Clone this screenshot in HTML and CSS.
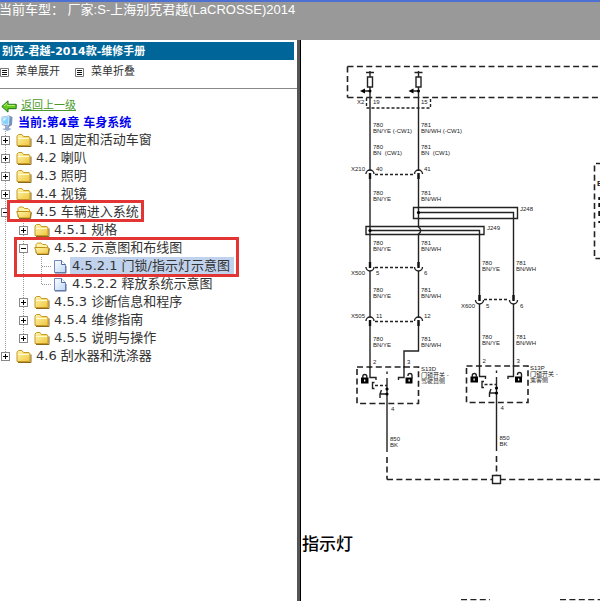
FILE: index.html
```html
<!DOCTYPE html>
<html lang="zh-CN">
<head>
<meta charset="utf-8">
<title>别克-君越-2014款-维修手册</title>
<link rel="stylesheet" href="styles.css">
</head>
<body>
<svg class="defs" aria-hidden="true">
  <defs>
    <linearGradient id="gold" x1="0" y1="0" x2="1" y2="1"><stop offset="0" stop-color="#fff6b0"/><stop offset="1" stop-color="#efc53c"/></linearGradient>
    <linearGradient id="paper" x1="0" y1="0" x2="1" y2="1"><stop offset="0" stop-color="#fff"/><stop offset="1" stop-color="#bcd6f8"/></linearGradient>
    <symbol id="folder" viewBox="0 0 16 16"><path d="M1 13.5V4l1.5-1.500h3.500L7.500 4.500H13l1 1.500v7.500z" fill="url(#gold)" stroke="#c79a28"/><path d="M2 14.500h13V6.500" fill="none" stroke="#8c6a18"/><path d="M2 6.500h11" stroke="#fffbd0"/></symbol>
    <symbol id="open" viewBox="0 0 16 16"><path d="M2 13V4.500L3.500 3H7l1.500 1.500H12L13.500 6v7z" fill="#fff3a8" stroke="#c79a28"/><path d="M.7 7.500h10.500L15 8l-1 6H3z" fill="url(#gold)" stroke="#c0901f"/><path d="M3 14.500h11.500l.8-6" fill="none" stroke="#8c6a18"/></symbol>
    <symbol id="page" viewBox="0 0 16 16"><path d="M2.500 2.500h7l4 4v8h-11z" fill="url(#paper)" stroke="#7089bd"/><path d="M9.500 2.500v4h4" fill="#fff" stroke="#52699f"/><path d="M3 15h11V8" fill="none" stroke="#596a91"/></symbol>
    <symbol id="menu" viewBox="0 0 9 9"><path d="M.5.5h8v8h-8z" fill="#fff" stroke="#777"/><path d="M2 2.500h5M2 4.500h5M2 6.500h5" stroke="#111"/></symbol>
  </defs>
</svg>

<header class="top">当前车型： 厂家:S-上海别克君越(LaCROSSE)2014</header>

<main class="frames">
  <aside class="side">
    <h1 class="title">别克-君越-2014款-维修手册</h1>
    <div class="tools">
      <button class="tool" type="button"><svg class="menu"><use href="#menu"/></svg>菜单展开</button>
      <button class="tool" type="button"><svg class="menu"><use href="#menu"/></svg>菜单折叠</button>
    </div>
    <nav class="nav">
      <a class="back" href="#up"><svg class="arrow" viewBox="0 0 16 13"><path d="M.8 6.500L7 .9v3.400h8.200v4.400H7v3.400z" fill="#65cb21" stroke="#1c7212"/><path d="M3 6L6.200 3.200M6 5.400h8" stroke="#bdf27c" fill="none"/></svg><span>返回上一级</span></a>
      <div class="current"><svg class="pc" viewBox="0 0 14 16"><path d="M1 2l8-1.500 3.500 1.500-.5 8-3 2-7-2z" fill="#7793bd"/><path d="M1.500 2.500L9 1.500l-.5 8.500-6-1z" fill="#83d4fa" stroke="#d2e8f8"/><path d="M3 3.500l4-.5-3.500 3.500z" fill="#d8f5ff"/><path d="M5 11l4 1v2H5zM2 14l6-1.500 3.500 1.500-4 2z" fill="#94a9c8"/></svg>当前:第4章 车身系统</div>

      <ul class="tree">
        <li><div class="row"><button class="box plus" type="button" aria-label="4.1"></button><svg class="ico"><use href="#folder"/></svg><a href="#s1">4.1 固定和活动车窗</a></div></li>
        <li><div class="row"><button class="box plus" type="button" aria-label="4.2"></button><svg class="ico"><use href="#folder"/></svg><a href="#s2">4.2 喇叭</a></div></li>
        <li><div class="row"><button class="box plus" type="button" aria-label="4.3"></button><svg class="ico"><use href="#folder"/></svg><a href="#s3">4.3 照明</a></div></li>
        <li><div class="row"><button class="box plus" type="button" aria-label="4.4"></button><svg class="ico"><use href="#folder"/></svg><a href="#s4">4.4 视镜</a></div></li>
        <li><div class="row marked"><button class="box" type="button" aria-label="4.5"></button><svg class="ico"><use href="#open"/></svg><a href="#s5">4.5 车辆进入系统</a></div>
          <ul>
            <li><div class="row"><button class="box plus" type="button" aria-label="4.5.1"></button><svg class="ico"><use href="#folder"/></svg><a href="#s51">4.5.1 规格</a></div></li>
            <li class="group"><div class="row"><button class="box" type="button" aria-label="4.5.2"></button><svg class="ico"><use href="#open"/></svg><a href="#s52">4.5.2 示意图和布线图</a></div>
              <ul>
                <li><div class="row"><span class="twig"></span><svg class="ico"><use href="#page"/></svg><a class="selected" href="#s521">4.5.2.1 门锁/指示灯示意图</a></div></li>
                <li><div class="row"><span class="twig"></span><svg class="ico"><use href="#page"/></svg><a href="#s522">4.5.2.2 释放系统示意图</a></div></li>
              </ul>
            </li>
            <li><div class="row"><button class="box plus" type="button" aria-label="4.5.3"></button><svg class="ico"><use href="#folder"/></svg><a href="#s53">4.5.3 诊断信息和程序</a></div></li>
            <li><div class="row"><button class="box plus" type="button" aria-label="4.5.4"></button><svg class="ico"><use href="#folder"/></svg><a href="#s54">4.5.4 维修指南</a></div></li>
            <li><div class="row"><button class="box plus" type="button" aria-label="4.5.5"></button><svg class="ico"><use href="#folder"/></svg><a href="#s55">4.5.5 说明与操作</a></div></li>
          </ul>
        </li>
        <li><div class="row"><button class="box plus" type="button" aria-label="4.6"></button><svg class="ico"><use href="#folder"/></svg><a href="#s6">4.6 刮水器和洗涤器</a></div></li>
      </ul>
    </nav>
  </aside>

  <section class="doc">
    <svg class="diagram" width="299" height="490" viewBox="301 40 299 490">
      <defs>
        <g id="switch">
          <path class="dash" d="M357 367H418.500V403.500H357z"/>
          <path class="wire" d="M370 366V377.500H376V380M404 366V377.500H398.500V380M387 378V452M380 394H387M381.500 390L380 394V398"/>
          <path class="wire" d="M387 371.500V374M374.500 382.500H372.500V388.500H374.500"/>
          <path class="fine" d="M375 385.500H387"/>
          <circle cx="387" cy="389" r="1.600"/><circle cx="387" cy="394" r="1.600"/>
          <path d="M361 377.500h7.500v6H361z"/><path class="wire" d="M362.800 378v-1.500a2 2 0 0 1 4 0v1.500"/><path d="M364 379.500h1.300v2H364z" fill="#fff"/>
          <path d="M405.500 377.500h7v6h-7z"/><path class="wire" d="M408 376v-.5a1.800 1.800 0 0 1 4 0v3"/><path d="M408.500 379.500h1.300v2h-1.300z" fill="#fff"/>
          <path class="dash" d="M387 457V479.500"/>
          <text x="373" y="364">2</text><text x="407" y="364">3</text><text x="391" y="411">4</text>
          <text x="390" y="441">850</text><text x="390" y="447">BK</text>
        </g>
        <g id="cap"><path class="wire" d="M-4 3A4 4 0 0 1 4 3"/><path class="pin" d="M0 2V8"/></g>
        <g id="cup"><path class="wire" d="M-4 0A4 4 0 0 0 4 0"/><path class="pin" d="M0 -5V1"/></g>
        <g id="fuse"><path class="wire" d="M-4 72.500H4M0 71V77M0 87V98M0 91H-6"/><path class="wire" d="M-2.500 77H2.500V87H-2.500z"/><path d="M-10 91L-5 88.500V93.500z"/><circle cy="91" r="1.500"/></g>
      </defs>
      <path class="dash" d="M347.500 66.500V97.500M347.500 66.500H602M347.500 97.500H602"/>
      <use href="#fuse" x="370"/><use href="#fuse" x="418.500"/>
      <path class="fine" d="M366.500 98V108H430.500V98"/>
      <path class="wire" d="M370 97V171M418.500 97V171M370 175V267M418.500 175V227Q423 230.500 418.500 234V267M370 271V318M418.500 271V318M370 322V368M418.500 322V351H404V368M370 230.500H479.500V300M418.500 212.500H513.500V300M479.500 304V367M513.500 304V367"/>
      <path class="wire" d="M413.500 207.500H517.500V218.500H413.500zM366 226.500H484V234.500H366z"/>
      <circle cx="370" cy="230.500" r="1.600"/><circle cx="418.500" cy="212.500" r="1.600"/>
      <use href="#cap" x="370" y="171"/><use href="#cap" x="418.500" y="171"/>
      <use href="#cup" x="370" y="267"/><use href="#cup" x="418.500" y="267"/>
      <use href="#cap" x="370" y="318"/><use href="#cap" x="418.500" y="318"/>
      <use href="#cup" x="479.500" y="300"/><use href="#cup" x="513.500" y="300"/>
      <path class="fine" d="M375 174.500H414M375 267.500H414M375 321.500H414M484 299.500H509"/>
      <use href="#switch"/><use href="#switch" x="109.500" y="-1"/>
      <path class="dash" d="M387 479.500H602"/>
      <path class="square" d="M492.500 475.500h8v8h-8z"/>
      <path class="dash" d="M602 163.500H594.500V258.500H602"/>
      <text class="strong" x="597" y="186">B</text>
      <path class="pin" d="M599.500 197v3M599.500 203v4M599.500 211v5M599.500 221v2"/>

      <text x="357" y="104">X2</text><text x="373" y="104">19</text><text x="421" y="104">15</text>
      <text x="373" y="127">780</text><text x="373" y="133">BN/YE (-CW1)</text><text x="421" y="127">781</text><text x="421" y="133">BN/WH (-CW1)</text>
      <text x="373" y="149">780</text><text x="373" y="155">BN&#160; (CW1)</text><text x="421" y="149">781</text><text x="421" y="155">BN&#160; (CW1)</text>
      <text x="351" y="171">X210</text><text x="376" y="171">40</text><text x="424" y="171">41</text>
      <text x="373" y="195">780</text><text x="373" y="201">BN/YE</text><text x="421" y="195">781</text><text x="421" y="201">BN/WH</text>
      <text x="520" y="211">J248</text><text x="487" y="230">J249</text>
      <text x="373" y="245">780</text><text x="373" y="251">BN/YE</text><text x="421" y="245">781</text><text x="421" y="251">BN/WH</text>
      <text x="351" y="275">X500</text><text x="376" y="275">5</text><text x="424" y="275">6</text>
      <text x="373" y="292">780</text><text x="373" y="298">BN/YE</text><text x="421" y="292">781</text><text x="421" y="298">BN/WH</text>
      <text x="351" y="318">X505</text><text x="376" y="318">11</text><text x="424" y="318">12</text>
      <text x="373" y="341">780</text><text x="373" y="347">BN/YE</text><text x="421" y="341">781</text><text x="421" y="347">BN/WH</text>
      <text x="482" y="265">780</text><text x="482" y="271">BN/YE</text><text x="516" y="265">781</text><text x="516" y="271">BN/WH</text>
      <text x="461" y="308">X600</text><text x="486" y="308">5</text><text x="520" y="308">6</text>
      <text x="482" y="339">780</text><text x="482" y="345">BN/YE</text><text x="516" y="339">781</text><text x="516" y="345">BN/WH</text>
      <text x="421" y="371">S13D</text><text x="421" y="377">门锁开关 -</text><text x="421" y="383">驾驶员侧</text>
      <text x="530" y="370">S13P</text><text x="530" y="376">门锁开关 -</text><text x="530" y="382">乘客侧</text>
    </svg>
    <h2 class="heading">指示灯</h2>
    <svg class="next" width="299" height="40" viewBox="301 600 299 40"><path class="dash" d="M461 600.500H490M560 600.500H602"/></svg>
  </section>
</main>
</body>
</html>
```
FILE: styles.css
```css
*, ::before, ::after { box-sizing: border-box; }

body {
  margin: 0;
  height: 100vh;
  display: flex;
  flex-direction: column;
  overflow: hidden;
  background: #fff;
  color: #333;
  font: 13px/18px "DejaVu Sans", "Noto Sans CJK SC", sans-serif;
}

.defs { position: absolute; width: 0; height: 0; }

button {
  padding: 0;
  border: 0;
  background: none;
  font: inherit;
  color: inherit;
}

a { color: inherit; text-decoration: none; }

.top {
  flex: none;
  height: 40px;
  border-top: 2px solid #4d70d2;
  background: #999;
  color: #fff;
  font: 13px/16px "Liberation Sans", "Noto Sans CJK SC", sans-serif;
  text-indent: -1px;
}

.frames {
  flex: 1;
  min-height: 0;
  display: flex;
}

.side {
  flex: none;
  width: 301px;
  padding-top: 2px;
  border-right: 1px solid #000;
  box-shadow: inset -3px 0 #555;
}

.title {
  margin: 0 6px 0 0;
  padding: 2px 0 0 2px;
  background: #069;
  color: #fff;
  font-size: 11px;
  line-height: 16px;
}

.tools {
  display: flex;
  gap: 15px;
  height: 29px;
  margin-right: 3px;
  padding-top: 3px;
  border-bottom: 1px solid #888;
  font-size: 11px;
}

.tool {
  display: flex;
  align-items: center;
  gap: 7px;
  height: 18px;
}

.menu { width: 9px; height: 9px; }

.nav { padding-top: 8px; }

.back {
  display: flex;
  align-items: center;
  gap: 4px;
  padding-left: 1px;
  color: #4a9a2a;
  font-size: 11px;
}

.back span { text-decoration: underline; }

.arrow { width: 16px; height: 13px; }

.current {
  display: flex;
  align-items: center;
  gap: 4px;
  color: #00e;
  font-size: 12px;
  font-weight: bold;
  line-height: 16px;
}

.pc { width: 14px; height: 16px; }

.tree, .tree ul {
  margin: 0;
  padding: 0;
  list-style: none;
}

.tree ul { padding-left: 18px; }

.tree li {
  background: repeating-linear-gradient(#999 0 1px, transparent 1px 2px) 5px 0 / 1px 100% no-repeat;
}

.tree > li:last-child,
.tree ul > li:last-child { background-size: 1px 9px; }

.row {
  display: flex;
  align-items: center;
  height: 18px;
  white-space: nowrap;
}

.box {
  flex: none;
  width: 9px;
  height: 9px;
  margin: 0 6px 0 1px;
  border: 1px solid #888;
  background: linear-gradient(#000, #000) center / 5px 1px no-repeat, #fff;
}

.plus {
  background: linear-gradient(#000, #000) center / 5px 1px no-repeat, linear-gradient(#000, #000) center / 1px 5px no-repeat, #fff;
}

.twig {
  flex: none;
  width: 9px;
  margin: 0 1px 0 6px;
  border-top: 1px dotted #999;
}

.ico {
  flex: none;
  width: 16px;
  height: 16px;
  margin-right: 2px;
}

.row a { padding: 0 4px 0 2px; }

.selected { background: #c0d2ec; }

.marked, .group { position: relative; }

.marked::after, .group::after {
  content: "";
  position: absolute;
  border: 3px solid #e43535;
  pointer-events: none;
}

.marked::after { left: 7px; top: -3px; width: 137px; height: 22px; }

.group::after { left: -4px; top: -2px; width: 225px; height: 40px; }

.doc {
  flex: 1;
  min-width: 0;
  overflow: hidden;
  color: #000;
}

.diagram, .next { display: block; }

.diagram text {
  font: 6px "Liberation Sans", "Noto Sans CJK SC", sans-serif;
  fill: #222;
}

.diagram .strong { font-size: 8px; font-weight: bold; }

.wire { fill: none; stroke: #222; stroke-width: 1.4; }

.square { fill: #fff; stroke: #222; stroke-width: 1.4; }

.dash { fill: none; stroke: #222; stroke-width: 1.6; stroke-dasharray: 6 3.4; }

.fine { fill: none; stroke: #222; stroke-width: 1.4; stroke-dasharray: 3 2; }

.pin { fill: none; stroke: #111; stroke-width: 2.4; }

.heading {
  margin: 0 0 42px;
  padding: 1px 0 2px 1px;
  font: 500 17px/24px "Noto Sans CJK SC", sans-serif;
}
```
